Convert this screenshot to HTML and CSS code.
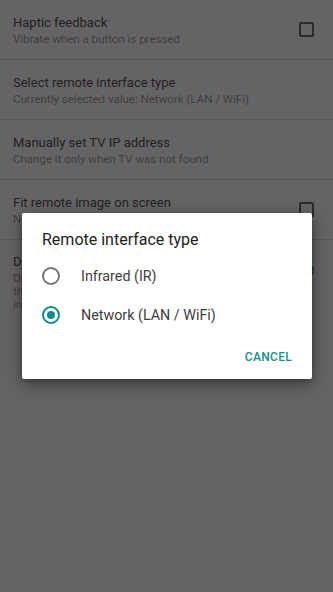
FILE: index.html
```html
<!DOCTYPE html>
<html lang="en">
<head>
    <meta charset="UTF-8">
    <meta name="viewport" content="width=device-width, initial-scale=1.0">
    <title>Settings</title>
    <link rel="stylesheet" href="styles.css">
</head>
<body>
    <div class="settings">
        <div class="pref">
            <div class="pref-text">
                <div class="pref-title">Haptic feedback</div>
                <div class="pref-summary">Vibrate when a button is pressed</div>
            </div>
            <span class="checkbox"></span>
        </div>
        <div class="pref">
            <div class="pref-text">
                <div class="pref-title">Select remote interface type</div>
                <div class="pref-summary">Currently selected value: Network (LAN / WiFi)</div>
            </div>
        </div>
        <div class="pref">
            <div class="pref-text">
                <div class="pref-title">Manually set TV IP address</div>
                <div class="pref-summary">Change it only when TV was not found</div>
            </div>
        </div>
        <div class="pref">
            <div class="pref-text">
                <div class="pref-title">Fit remote image on screen</div>
                <div class="pref-summary">Not recommended</div>
            </div>
            <span class="checkbox"></span>
        </div>
        <div class="pref pref-tall">
            <div class="pref-text">
                <div class="pref-title">Dark</div>
                <div class="pref-summary">Dims<br>the<br>in</div>
            </div>
            <span class="switch"><span class="thumb"></span></span>
        </div>
    </div>

    <div class="dialog">
        <h3>Remote interface type</h3>
        <div class="option">
            <span class="radio"></span>
            <span>Infrared (IR)</span>
        </div>
        <div class="option">
            <span class="radio checked"></span>
            <span>Network (LAN / WiFi)</span>
        </div>
        <div class="actions">
            <button>CANCEL</button>
        </div>
    </div>
</body>
</html>
```

FILE: styles.css
```css
body {
    font-family: Roboto, "Noto Sans", sans-serif;
    background-color: #666366;
    margin: 0;
    width: 333px;
    height: 592px;
    overflow: hidden;
    position: relative;
}
.pref {
    display: flex;
    align-items: center;
    justify-content: space-between;
    height: 60px;
    padding: 0 19px 0 13px;
    border-bottom: 1px solid #5a575a;
    box-sizing: border-box;
}
.pref-tall { height: 72px; align-items: flex-start; padding-top: 13px; border-bottom: none; }
.pref-title { font-size: 13px; line-height: 17px; color: #232123; }
.pref-summary { font-size: 11.5px; line-height: 13px; color: #413f41; margin-top: 2px; }
.checkbox {
    width: 11px;
    height: 11px;
    border: 2px solid #2c2a2c;
    border-radius: 2px;
}
.switch {
    position: relative;
    width: 32px;
    height: 13px;
    margin-top: 11px;
    margin-right: 2px;
    border-radius: 7px;
    background: #2d4f4c;
}
.thumb {
    position: absolute;
    right: -2px;
    top: -3px;
    width: 19px;
    height: 19px;
    border-radius: 50%;
    background: #1d4a46;
}
.dialog {
    position: absolute;
    left: 22px;
    top: 213px;
    width: 290px;
    height: 166px;
    background: #fff;
    border-radius: 2px;
    box-shadow: 0 6px 18px rgba(0, 0, 0, 0.35), 0 2px 6px rgba(0, 0, 0, 0.25);
    box-sizing: border-box;
    padding: 17px 20px 0 20px;
}
.dialog h3 {
    margin: 0 0 7px 0;
    font-size: 16px;
    font-weight: 400;
    color: #222;
}
.option {
    display: flex;
    align-items: center;
    height: 39px;
    font-size: 14.3px;
    color: #404040;
}
.radio {
    width: 14px;
    height: 14px;
    border: 2px solid #777;
    border-radius: 50%;
    margin-right: 21px;
    box-sizing: content-box;
    position: relative;
}
.radio.checked { border-color: #118a8a; }
.radio.checked::after {
    content: "";
    position: absolute;
    left: 3px;
    top: 3px;
    width: 8px;
    height: 8px;
    border-radius: 50%;
    background: #118a8a;
}
.actions { display: flex; justify-content: flex-end; margin-top: 16px; }
.actions button {
    border: none;
    background: none;
    padding: 0;
    margin-right: 0;
    font-family: inherit;
    font-size: 12px;
    font-weight: 500;
    letter-spacing: 0.3px;
    color: #1a8c8c;
}
```
